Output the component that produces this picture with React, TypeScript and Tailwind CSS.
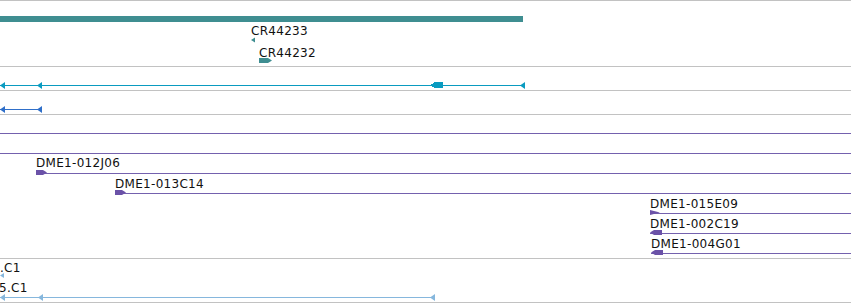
import React from 'react';

const W = 851;

type Label = { text: string; pos: string };

const Sep = () => <div className="h-px w-full bg-[#c2c2c2]" />;

// one track: glyphs drawn in an svg, feature names laid over them
const Track = ({ h, cls, labels, children }: { h: number; cls: string; labels?: Label[]; children: React.ReactNode }) => (
  <div className={`relative w-full overflow-hidden ${cls}`}>
    <svg width={W} height={h} className="absolute left-0 top-0" shapeRendering="crispEdges">
      {children}
    </svg>
    {labels?.map(l => (
      <span key={l.text} className={`absolute whitespace-nowrap text-[12px] leading-[14px] tracking-[0.3px] text-[#111] ${l.pos}`}>
        {l.text}
      </span>
    ))}
  </div>
);

// left pointing arrowhead, tip at x
const Left = ({ x, y, c, w = 5, hh = 3.5 }: { x: number; y: number; c: string; w?: number; hh?: number }) => (
  <polygon points={`${x},${y + 0.5} ${x + w},${y + 0.5 - hh} ${x + w},${y + 0.5 + hh}`} fill={c} shapeRendering="auto" />
);

// exon box with a pointed end
const Box = ({ x, y, w, c, dir }: { x: number; y: number; w: number; c: string; dir: 'l' | 'r' }) => {
  const top = y - 2, bot = y + 3;
  const pts = dir === 'r'
    ? `${x},${top} ${x + w - 4},${top} ${x + w},${y + 0.5} ${x + w - 4},${bot} ${x},${bot}`
    : `${x + 4},${top} ${x + w},${top} ${x + w},${bot} ${x + 4},${bot} ${x},${y + 0.5}`;
  return <polygon points={pts} fill={c} shapeRendering="auto" />;
};

const TEAL = '#3f8e91';
const CYAN = '#0a9bc0';
const BLUE = '#2f6fc9';
const PURPLE = '#6b52a8';
const PLINE = '#7461ae';
const LBLUE = '#86b7dd';

export default function App() {
  return (
    <div className="w-[851px] h-[303px] overflow-hidden bg-white font-['DejaVu_Sans',sans-serif] flex flex-col">
      <Sep />
      <Track
        h={65}
        cls="h-[65px]"
        labels={[
          { text: 'CR44233', pos: 'left-[251px] top-[23px]' },
          { text: 'CR44232', pos: 'left-[259px] top-[45px]' },
        ]}
      >
        <rect x={0} y={15} width={523} height={6} fill={TEAL} />
        <Left x={251} y={38.5} c={TEAL} w={4} hh={2.5} />
        <Box x={259} y={59} w={13} c={TEAL} dir="r" />
      </Track>
      <Sep />
      <Track h={23} cls="h-[23px]">
        <rect x={0} y={18} width={525} height={1} fill={CYAN} />
        <Left x={0} y={18} c={CYAN} />
        <Left x={37} y={18} c={CYAN} />
        <rect x={434} y={15} width={9} height={6} fill={CYAN} />
        <polygon points="430,18.5 435,15 435,21" fill={CYAN} />
        <Left x={520} y={18} c={CYAN} />
      </Track>
      <Sep />
      <Track h={23} cls="h-[23px]">
        <rect x={0} y={18} width={42} height={1} fill={BLUE} />
        <Left x={0} y={18} c={BLUE} />
        <Left x={37} y={18} c={BLUE} />
      </Track>
      <Sep />
      <Track
        h={143}
        cls="h-[143px]"
        labels={[
          { text: 'DME1-012J06', pos: 'left-[36px] top-[41px]' },
          { text: 'DME1-013C14', pos: 'left-[115px] top-[62px]' },
          { text: 'DME1-015E09', pos: 'left-[650px] top-[82px]' },
          { text: 'DME1-002C19', pos: 'left-[650px] top-[102px]' },
          { text: 'DME1-004G01', pos: 'left-[651px] top-[122px]' },
        ]}
      >
        <rect x={0} y={18} width={W} height={1} fill={PLINE} />
        <rect x={0} y={38} width={W} height={1} fill={PLINE} />
        <rect x={36} y={58} width={W} height={1} fill={PLINE} />
        <Box x={36} y={57} w={11} c={PURPLE} dir="r" />
        <rect x={115} y={78} width={W} height={1} fill={PLINE} />
        <Box x={115} y={77} w={11} c={PURPLE} dir="r" />
        <rect x={650} y={98} width={W} height={1} fill={PLINE} />
        <polygon points="650,95 660,97.5 650,100" fill={PURPLE} shapeRendering="auto" />
        <rect x={650} y={118} width={W} height={1} fill={PLINE} />
        <Box x={650} y={117} w={12} c={PURPLE} dir="l" />
        <rect x={651} y={138} width={W} height={1} fill={PLINE} />
        <Box x={651} y={137} w={12} c={PURPLE} dir="l" />
      </Track>
      <Sep />
      <Track
        h={43}
        cls="h-[43px]"
        labels={[
          { text: '.C1', pos: 'left-0 top-[2px]' },
          { text: '5.C1', pos: '-left-px top-[22px]' },
        ]}
      >
        <Left x={0} y={16} c={LBLUE} w={4} hh={2.5} />
        <rect x={0} y={38} width={435} height={1} fill={LBLUE} />
        <Left x={0} y={38} c={LBLUE} />
        <Left x={38} y={38} c={LBLUE} />
        <Left x={430} y={38} c={LBLUE} />
      </Track>
      <Sep />
    </div>
  );
}
